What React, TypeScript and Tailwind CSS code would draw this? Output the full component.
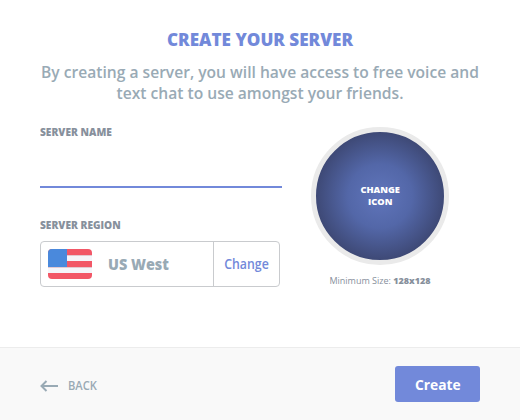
const RED = 'bg-[#f25767]';
const WHITE = 'bg-[#f5f5fa] border-t border-[#e3c9d0]';
const STRIPES = [RED, WHITE, RED, WHITE, RED];

function UsFlag() {
  return (
    <div className="relative flex h-[30px] w-11 flex-col overflow-hidden rounded">
      {STRIPES.map((color, i) => (
        <div key={i} className={`h-1.5 ${color}`} />
      ))}
      <div className="absolute top-0 left-0 h-[18px] w-[19px] bg-[#4a89dc]" />
    </div>
  );
}

function FieldLabel({ children }: { children: string }) {
  return (
    <div className="origin-left scale-x-[0.925] text-[11px] leading-4 font-extrabold whitespace-nowrap text-[#87909c]">{children}</div>
  );
}

function BackArrow() {
  return (
    <svg width="19" height="12" viewBox="0 0 19 12" fill="none" stroke="#99aab5" strokeWidth="2">
      <path d="M18 6H2M6.5 1 1.5 6l5 5" />
    </svg>
  );
}

export default function App() {
  return (
    <div className="flex h-[420px] w-[520px] flex-col bg-white font-['Open_Sans','Noto_Sans',sans-serif]">
      <main className="flex h-[347px] flex-col px-10 pt-[27px]">
        <h1 className="scale-x-95 text-center text-[18px] leading-6 font-extrabold whitespace-nowrap text-[#7289da]">
          CREATE YOUR SERVER
        </h1>
        <p className="-mx-5 mt-2.5 scale-x-[0.918] text-center text-[17px] leading-[21px] font-semibold whitespace-nowrap text-[#99aab5]">
          By creating a server, you will have access to free voice and
          <br />
          text chat to use amongst your friends.
        </p>
        <div className="mt-[21px] flex">
          <section className="w-[242px]">
            <FieldLabel>SERVER NAME</FieldLabel>
            <input aria-label="Server name" className="block h-[48px] w-full border-b-2 border-[#7289da] outline-none" />
            <div className="mt-[29px]">
              <FieldLabel>SERVER REGION</FieldLabel>
            </div>
            <div className="mt-2 flex h-[46px] w-60 rounded border border-[#c9cbce]">
              <div className="flex w-[173px] items-center border-r border-[#c9cbce] pl-[7px]">
                <UsFlag />
                <span className="ml-4 origin-left scale-x-90 text-base leading-5 font-extrabold whitespace-nowrap text-[#99aab5]">US West</span>
              </div>
              <button className="flex-1 scale-x-[0.88] text-center text-sm font-semibold text-[#7289da]">Change</button>
            </div>
          </section>
          <section className="ml-[29px] flex w-[138px] flex-col items-center pt-[3px]">
            <div className="flex size-[138px] shrink-0 items-center justify-center rounded-full border-[5px] border-[#eaeaea] bg-[radial-gradient(circle_closest-side,#6075bb_0%,#5367a8_50%,#3e4976_100%)] text-[9px] font-extrabold text-white">
              <div className="flex scale-x-[1.03] flex-col items-center">
                <span className="h-3 leading-3">CHANGE</span>
                <span className="h-3 leading-3">ICON</span>
              </div>
            </div>
            <div className="mt-2 text-[9px] leading-4 whitespace-nowrap text-[#87909c]">
              Minimum Size: <b className="font-extrabold">128x128</b>
            </div>
          </section>
        </div>
      </main>
      <footer className="flex h-[73px] items-start justify-between border-t border-[#ececec] bg-[#f9f9f9] px-10 pt-[18px]">
        <button className="mt-3 flex items-center gap-[9px] text-xs leading-4 font-semibold text-[#99aab5]">
          <BackArrow />
          <span className="origin-left scale-x-[0.93]">BACK</span>
        </button>
        <button className="flex h-9 w-[85px] items-center justify-center rounded-[3px] bg-[#7289da] text-[15px] font-bold text-white">
          <span className="scale-x-[0.92]">Create</span>
        </button>
      </footer>
    </div>
  );
}
